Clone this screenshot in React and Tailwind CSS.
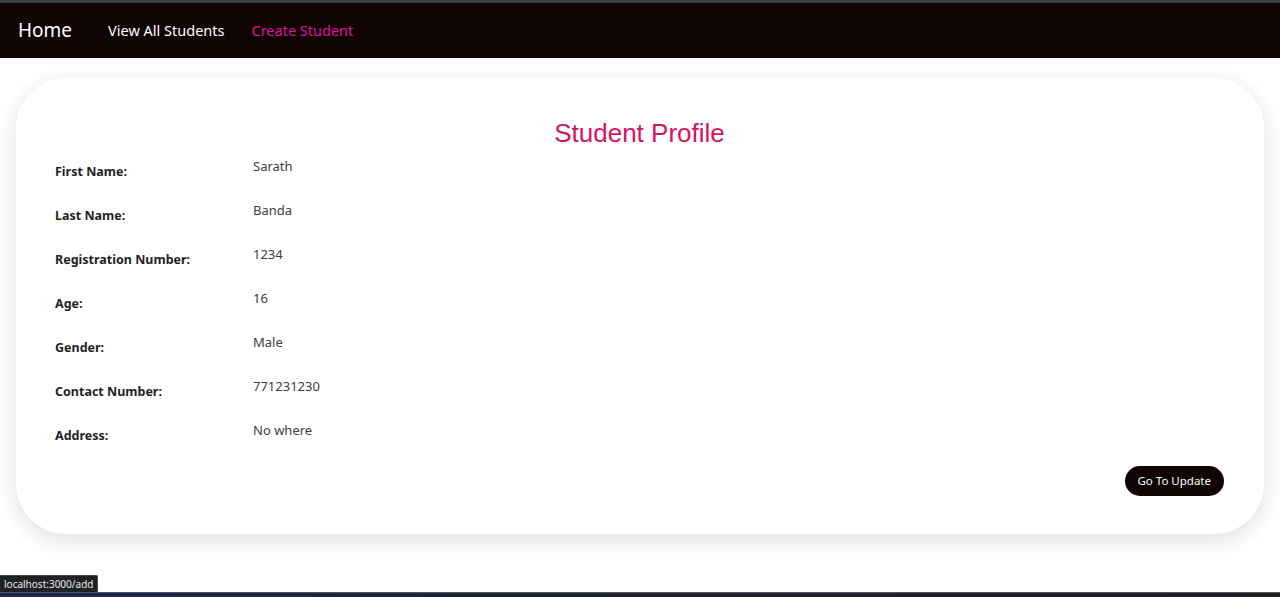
const student = [
  { label: 'First Name:', value: 'Sarath' },
  { label: 'Last Name:', value: 'Banda' },
  { label: 'Registration Number:', value: '1234' },
  { label: 'Age:', value: '16' },
  { label: 'Gender:', value: 'Male' },
  { label: 'Contact Number:', value: '771231230' },
  { label: 'Address:', value: 'No where' },
]

export default function App() {
  return (
    <div className="relative h-[597px] overflow-hidden bg-white flex flex-col font-['Noto_Sans',sans-serif]">
      {/* top browser edge */}
      <div className="h-[3px] bg-[#3c3c3c]"></div>

      {/* Navbar */}
      <nav className="h-[55px] bg-[#0f0304] flex items-center pl-[18px]">
        <a href="#" className="text-white text-[19px] mr-[36px]">Home</a>
        <a href="#" className="text-white text-[14.5px] mr-[27px]">View All Students</a>
        <a href="#" className="text-[#e0109c] text-[14.5px]">Create Student</a>
      </nav>

      {/* Profile card */}
      <div className="flex-1 px-[16px] pt-[20px]">
        <div className="bg-white rounded-[50px] shadow-[0_6px_22px_rgba(0,0,0,0.13)] pt-[40px] pb-[38px] pl-[39px] pr-[40px]">
          <h2 className="text-center text-[26px] leading-[30px] text-[#d4145f] font-['Liberation_Sans',Arial,sans-serif] mb-[9px]">
            Student Profile
          </h2>
          <div className="flex flex-col">
            {student.map(row => (
              <div key={row.label} className="flex h-[44px]">
                <div className="w-[198px] pt-[6px] text-[12.5px] leading-[18px] font-bold text-[#1f1f1f]">{row.label}</div>
                <div className="text-[13px] leading-[18px] text-[#404040]">{row.value}</div>
              </div>
            ))}
          </div>
          <div className="flex justify-end mt-[1px]">
            <button className="bg-[#0f0304] text-white text-[11.5px] h-[30px] px-[13px] rounded-full">
              Go To Update
            </button>
          </div>
        </div>
      </div>

      {/* status tooltip */}
      <div className="absolute left-0 bottom-[5px] h-[17px] px-[4px] bg-[#202124] border-t border-r border-[#4a4a4a] text-[#e8e8e8] text-[10px] leading-[16px] rounded-tr-[2px]">
        localhost:3000/add
      </div>

      {/* bottom edge */}
      <div className="h-[5px] bg-gradient-to-r from-[#1b2550] via-[#1c2233] to-[#1c1f26] border-t border-[#555]"></div>
    </div>
  )
}
